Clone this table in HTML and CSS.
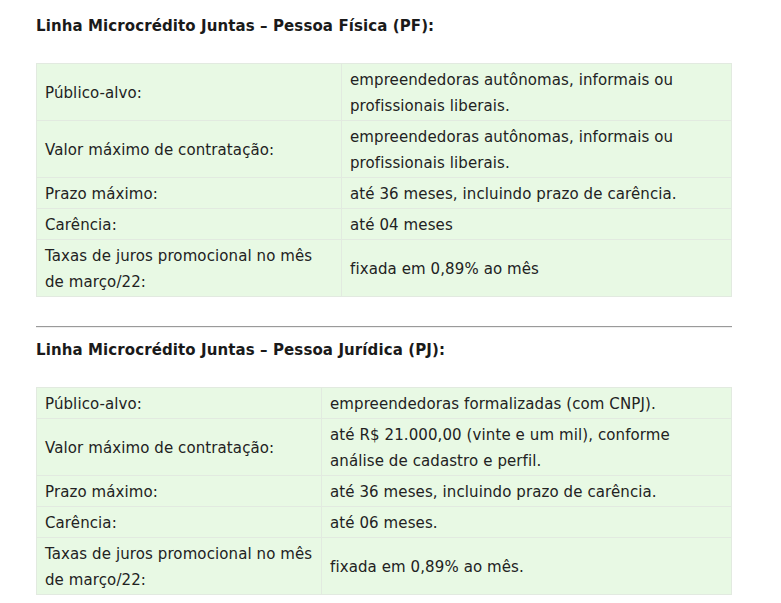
FILE: index.html
```html
<!DOCTYPE html>
<html lang="pt-BR">
<head>
<meta charset="utf-8">
<link rel="stylesheet" href="styles.css">
</head>
<body>
<div class="content">
  <p class="title">Linha Microcrédito Juntas – Pessoa Física (PF):</p>
  <table class="info info-pf">
    <tr><td class="label">Público-alvo:</td><td>empreendedoras autônomas, informais ou profissionais liberais.</td></tr>
    <tr><td class="label">Valor máximo de contratação:</td><td>empreendedoras autônomas, informais ou profissionais liberais.</td></tr>
    <tr><td class="label">Prazo máximo:</td><td>até 36 meses, incluindo prazo de carência.</td></tr>
    <tr><td class="label">Carência:</td><td>até 04 meses</td></tr>
    <tr><td class="label">Taxas de juros promocional no mês de março/22:</td><td>fixada em 0,89% ao mês</td></tr>
  </table>
  <hr class="sep">
  <p class="title">Linha Microcrédito Juntas – Pessoa Jurídica (PJ):</p>
  <table class="info info-pj">
    <tr><td class="label">Público-alvo:</td><td>empreendedoras formalizadas (com CNPJ).</td></tr>
    <tr><td class="label">Valor máximo de contratação:</td><td>até R$ 21.000,00 (vinte e um mil), conforme análise de cadastro e perfil.</td></tr>
    <tr><td class="label">Prazo máximo:</td><td>até 36 meses, incluindo prazo de carência.</td></tr>
    <tr><td class="label">Carência:</td><td>até 06 meses.</td></tr>
    <tr><td class="label">Taxas de juros promocional no mês de março/22:</td><td>fixada em 0,89% ao mês.</td></tr>
  </table>
</div>
</body>
</html>
```

FILE: styles.css
```css
html, body {
  margin: 0;
  padding: 0;
  background: #ffffff;
}

body {
  font-family: "DejaVu Sans", Verdana, sans-serif;
  font-size: 15px;
  letter-spacing: 0.1px;
  color: #222222;
}

.content {
  width: 696px;
  margin-left: 36px;
  padding-top: 13px;
}

.title {
  margin: 0 0 24px 0;
  font-weight: bold;
  line-height: 26px;
  color: #1a1a1a;
}

.info {
  width: 696px;
  border-collapse: collapse;
  table-layout: fixed;
  background: #e8f9e4;
}

.info td {
  border: 1px solid #e2eae0;
  padding: 3px 8px 1px 8px;
  line-height: 26px;
  vertical-align: middle;
}

.info-pf .label {
  width: 288px;
}

.info-pj .label {
  width: 268px;
}

.sep {
  margin: 29px 0 9px 0;
  border: 0;
  border-top: 1px solid #9a9a9a;
  border-bottom: 1px solid #eeeeee;
  height: 0;
}

.sep + .title {
  margin-top: 0;
}
```
